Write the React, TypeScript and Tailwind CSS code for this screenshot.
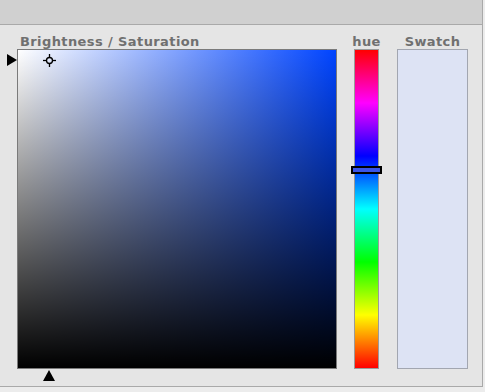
export default function App() {
  const labelCls = "text-[13px] font-bold leading-[14px] text-[#707070] tracking-[0.4px] whitespace-nowrap";

  return (
    <div className="w-[485px] h-[392px] bg-[#ececec] font-['DejaVu_Sans',sans-serif]">
      <div className="w-[483px] border-r border-[#a9a9a9] bg-[#e5e5e5]">
        {/* title bar */}
        <div className="h-[25px] bg-[#d0d0d0] border-b border-[#a9a9a9]" />

        {/* picker body */}
        <div className="h-[362px] border-b border-[#a9a9a9] pt-[10px] flex">
          {/* brightness / saturation */}
          <div className="ml-[17px] flex flex-col">
            <div className={`${labelCls} pl-[3px]`}>Brightness / Saturation</div>
            <div className="relative w-[320px] h-[320px] border border-[#7a7a7a]">
              <div className="absolute inset-0 bg-[linear-gradient(to_right,#ffffff,#0044ff)]" />
              <div className="absolute inset-0 bg-[linear-gradient(to_bottom,rgba(0,0,0,0),#000000)]" />
              <svg className="absolute left-[25px] top-[4px]" width="13" height="13" viewBox="0 0 13 13">
                <circle cx="6.5" cy="6.5" r="3" fill="none" stroke="#000" strokeWidth="1.3" />
                <line x1="6.5" y1="0" x2="6.5" y2="3.5" stroke="#000" strokeWidth="1.3" />
                <line x1="6.5" y1="9.5" x2="6.5" y2="13" stroke="#000" strokeWidth="1.3" />
                <line x1="0" y1="6.5" x2="3.5" y2="6.5" stroke="#000" strokeWidth="1.3" />
                <line x1="9.5" y1="6.5" x2="13" y2="6.5" stroke="#000" strokeWidth="1.3" />
              </svg>
              <svg className="absolute left-[-11px] top-[4px]" width="10" height="12" viewBox="0 0 10 12">
                <polygon points="0,0 10,6 0,12" fill="#000" />
              </svg>
              <svg className="absolute left-[25px] top-[320px]" width="12" height="11" viewBox="0 0 12 11">
                <polygon points="6,0 12,11 0,11" fill="#000" />
              </svg>
            </div>
          </div>

          {/* hue */}
          <div className="ml-[17px] w-[25px] flex flex-col items-center">
            <div className={labelCls}>hue</div>
            <div className="relative w-[25px] h-[320px] border border-[#9a9a9a] bg-[linear-gradient(to_bottom,#ff0000,#ff00ff,#0000ff,#00ffff,#00ff00,#ffff00,#ff0000)]">
              <div className="absolute left-[-4px] top-[116px] w-[31px] h-[8px] border-2 border-black bg-[#3a55e8]" />
            </div>
          </div>

          {/* swatch */}
          <div className="ml-[18px] w-[71px] flex flex-col items-center">
            <div className={labelCls}>Swatch</div>
            <div className="w-[71px] h-[320px] border border-[#a2a6b0] bg-[#dde3f4]" />
          </div>
        </div>
      </div>
    </div>
  );
}
